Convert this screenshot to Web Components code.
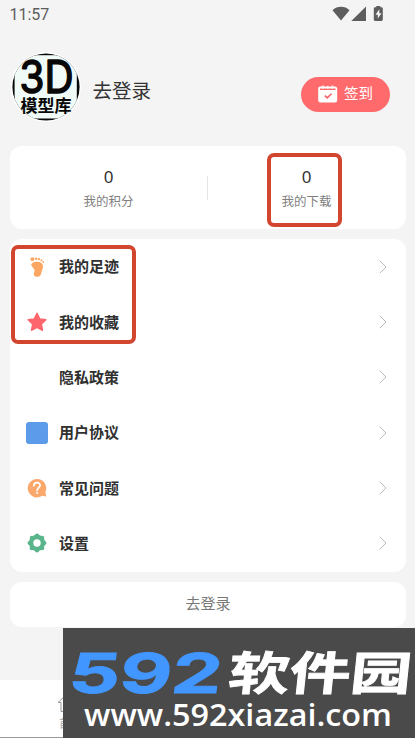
<!DOCTYPE html>
<html lang="zh-CN"><head><meta charset="utf-8"><title>我的</title>
<style>html,body{margin:0;width:415px;height:738px;overflow:hidden;background:#f4f4f4}body{font-family:Roboto,"Noto Sans CJK SC",sans-serif;color:#333}</style></head>
<body><profile-page></profile-page>
<script>
const define=(name,html)=>{
  customElements.define(name,class extends HTMLElement{
    constructor(){super();const t=document.createElement('template');
      t.innerHTML='<style>*{box-sizing:border-box}svg{display:block;overflow:visible}</style>'+html;
      this.attachShadow({mode:'open'}).append(t.content.cloneNode(true));}
  });
};
define('status-bar',`<style>:host{display:flex;height:28px;padding:1px 31px 0 9.5px;align-items:center;justify-content:space-between;font:16px/28px Roboto,sans-serif;color:#5d5d5d}svg{margin-top:-2px}</style>
<span>11:57</span><svg width="52" height="16" viewBox="332 6 52 16" fill="#5d5d5d"><path d="M332.5 10.3C337 5.7 345 5.700 349.500 10.3L341 20.6Z"/><path d="M366 6.6V21H351.3Z"/><path fill-rule="evenodd" d="M376.3 6h4v1.3h1.2q1.3 0 1.3 1.3v11q0 1.4-1.3 1.4h-6.4q-1.3 0-1.3-1.4v-11q0-1.3 1.3-1.3h1.2ZM379.3 9.2l-3.8 5.5h2.3v3.9l3.7-5.4h-2.2Z"/></svg>`);
define('user-avatar',`<style>:host{display:block;width:70px;height:70px}text{font-family:"Noto Sans CJK SC",sans-serif;fill:#080808}</style>
<svg width="70" height="70"><defs><clipPath id="c"><circle cx="35" cy="35" r="33.6"/></clipPath></defs><circle cx="35" cy="35" r="35" fill="#fff"/><g clip-path="url(#c)"><rect width="70" height="70" fill="#080808"/><rect x="3.600" y="3.2" width="62.2" height="63.3" fill="#f0faf6"/></g>
<text x="8.500" y="40.500" textLength="54" lengthAdjust="spacingAndGlyphs" stroke="#080808" stroke-width="1.6" stroke-linejoin="round" style="font:400 45px Inter,sans-serif">3D</text>
<text x="9.5" y="60" textLength="51" font-size="17" font-weight="700">模型库</text></svg>`);
define('check-in',`<style>:host{display:flex;width:89px;height:35px;border-radius:18px;background:#ff6a6d;color:#fff;align-items:center;padding-left:17px;gap:6px;font-size:14.5px;line-height:35px}</style>
<svg width="20" height="18"><path fill="#fff" fill-rule="evenodd" d="M2.2 1.5H17q2.2 0 2.2 2v11.7q0 2.2-2.2 2.2H2.4Q.2 17.4.2 15.2V3.5Q.2 1.5 2.2 1.5ZM2 3.6v1.3h15.5V3.6Z"/><path d="M5 .5v3M9.7 1v2.5M14.4.5v3" stroke="#fff" stroke-width="1.4"/><path d="M6.8 10.6l2.4 2.3 4.3-4.2" fill="none" stroke="#f65f66" stroke-width="1.5"/></svg><slot></slot>`);
define('user-header',`<style>:host{display:flex;height:118px;align-items:flex-start;padding:24px 25px 0 11px}.n{font-size:19.5px;line-height:30px;margin:25px 0 0 11.5px;flex:1}check-in{margin-top:24.5px}</style><user-avatar></user-avatar><span class="n">去登录</span><check-in>签到</check-in>`);
define('stat-item',`<style>:host{display:flex;flex-direction:column;align-items:center;padding-top:20px}b{font:17px/22px "Noto Sans",sans-serif;color:#333}span{font-size:12.5px;line-height:18px;margin-top:5px;color:#808080}</style><b>0</b><span><slot></slot></span>`);
define('stats-card',`<style>:host{display:grid;grid-template-columns:197px 1px 197px;height:83px;background:#fff;border-radius:12px}i{width:1px;height:24px;background:#e5e5e5;margin-top:29.5px}</style><stat-item>我的积分</stat-item><i></i><stat-item>我的下载</stat-item>`);
define('menu-row',`<style>:host{display:flex;height:55.35px;align-items:center;padding:0 19px 0 16px}.t{flex:1;font-size:15px;font-weight:700;line-height:24px;margin:1px 0 0 11px;color:#303030}.i{width:22px;height:22px}</style><div class="i"><slot name="icon"></slot></div><span class="t"><slot></slot></span><svg width="8" height="14"><path d="M.8.8 7 7 .8 13.2" fill="none" stroke="#bbb"/></svg>`);
define('menu-card',`<style>:host{display:flex;flex-direction:column;height:333px;background:#fff;border-radius:12px}</style>
<menu-row><svg slot="icon" width="22" height="22" fill="#fca663"><path d="M5.2 8.600Q6.200 5.600 10.500 5.700q6-.2 6.500 4.300c.3 3-1.300 4-1.600 6.500-.3 2.600-1.500 4.300-4 4.300-3.300 0-4.200-2-3.200-4.500.7-2 .2-3-.9-4.200q-2.200-1.700-2.100-3.500Z"/><ellipse cx="6.4" cy="3.200" rx="1.9" ry="1.900"/><circle cx="10.2" cy="2.8" r="1.3"/><circle cx="13" cy="3.1" r="1.15"/><circle cx="15.5" cy="4.2" r="1.05"/><circle cx="17.2" cy="6" r=".9"/></svg>我的足迹</menu-row>
<menu-row><svg slot="icon" width="22" height="22"><path d="M11 2.2l2.7 5.7 6.2.8-4.5 4.4 1.1 6.2-5.5-2.9-5.5 2.9 1.1-6.2-4.5-4.4 6.2-.8Z" fill="#fd666c" stroke="#fd666c" stroke-width="1.4" stroke-linejoin="round"/></svg>我的收藏</menu-row>
<menu-row>隐私政策</menu-row>
<menu-row><svg slot="icon" width="22" height="22"><rect width="22" height="22" rx="3" fill="#5b9be9"/></svg>用户协议</menu-row>
<menu-row><svg slot="icon" width="22" height="22"><path fill="#fba86d" d="M11 2a9.2 9.2 0 0 1 8.4 13.1l.8 4.4-4.1-.7A9.2 9.2 0 1 1 11 2Z"/><path d="M7.9 8.7c.2-4.2 6.4-3.8 6.2-.3-.1 2.1-3 2.3-3 5" fill="none" stroke="#fff" stroke-width="1.7" stroke-linecap="round"/><circle cx="11.1" cy="16" r="1" fill="#fff"/></svg>常见问题</menu-row>
<menu-row><svg slot="icon" width="22" height="22"><g fill="#5ab58c"><circle cx="11" cy="11" r="8.2"/><circle cx="11" cy="3.6" r="2.1"/><circle cx="16.2" cy="5.8" r="2.1"/><circle cx="18.4" cy="11" r="2.1"/><circle cx="16.2" cy="16.2" r="2.1"/><circle cx="11" cy="18.4" r="2.1"/><circle cx="5.8" cy="16.2" r="2.1"/><circle cx="3.6" cy="11" r="2.1"/><circle cx="5.8" cy="5.8" r="2.1"/></g><circle cx="11" cy="11" r="3.7" fill="#fff"/></svg>设置</menu-row>`);
define('login-button',`<style>:host{display:block;height:45px;background:#fff;border-radius:12px;text-align:center;font-size:15px;line-height:45px;color:#777}</style><slot></slot>`);
define('tab-bar',`<style>:host{display:block;height:58px;background:#fff;border-bottom:1px solid #999;padding:12px 0 0 57px}.l{display:block;font-size:11px;line-height:16px;color:#aaa;margin-top:4px;margin-left:2px}</style><svg width="20" height="21"><path d="M4 19.5V10.5H1L10 2l9 8.500h-3v9Z" fill="none" stroke="#999"/></svg><span class="l">首页</span>`);
define('site-banner',`<style>:host{display:block;position:absolute;left:63px;top:628px;width:352px;height:110px;background:#4a4a4a}</style>
<svg width="352" height="110"><g transform="translate(5 65) skewX(-7)"><text x="-1" y="0" textLength="153" lengthAdjust="spacingAndGlyphs" fill="#4296ff" stroke="#4296ff" stroke-width="1" style="font:700 55px Inter,sans-serif">592</text></g>
<g transform="translate(164 61.500) skewX(-6) scale(1.29 1)"><text textLength="142" lengthAdjust="spacingAndGlyphs" fill="#fff" stroke="#fff" stroke-width=".8" style="font:700 46px 'Noto Sans CJK SC'">软件园</text></g>
<text x="21" y="98" textLength="308" lengthAdjust="spacingAndGlyphs" fill="#fff" style="font:600 31px 'Open Sans'">www.592xiazai.com</text></svg>`);
define('mark-frame',`<style>:host{display:block;position:absolute;border:4px solid #d2452f;border-radius:7px;box-sizing:border-box}</style>`);
define('profile-page',`<style>:host{display:flex;flex-direction:column;position:relative;width:415px;height:738px;overflow:hidden;background:#f4f4f4}main{display:flex;flex-direction:column;gap:10px;padding:0 9px 0 10px;flex:1}.a{left:267px;top:153px;width:75px;height:74px}.b{left:11px;top:245px;width:125px;height:99px}</style>
<status-bar></status-bar><user-header></user-header><main><stats-card></stats-card><menu-card></menu-card><login-button>去登录</login-button></main><tab-bar></tab-bar><mark-frame class="a"></mark-frame><mark-frame class="b"></mark-frame><site-banner></site-banner>`);
</script></body></html>
